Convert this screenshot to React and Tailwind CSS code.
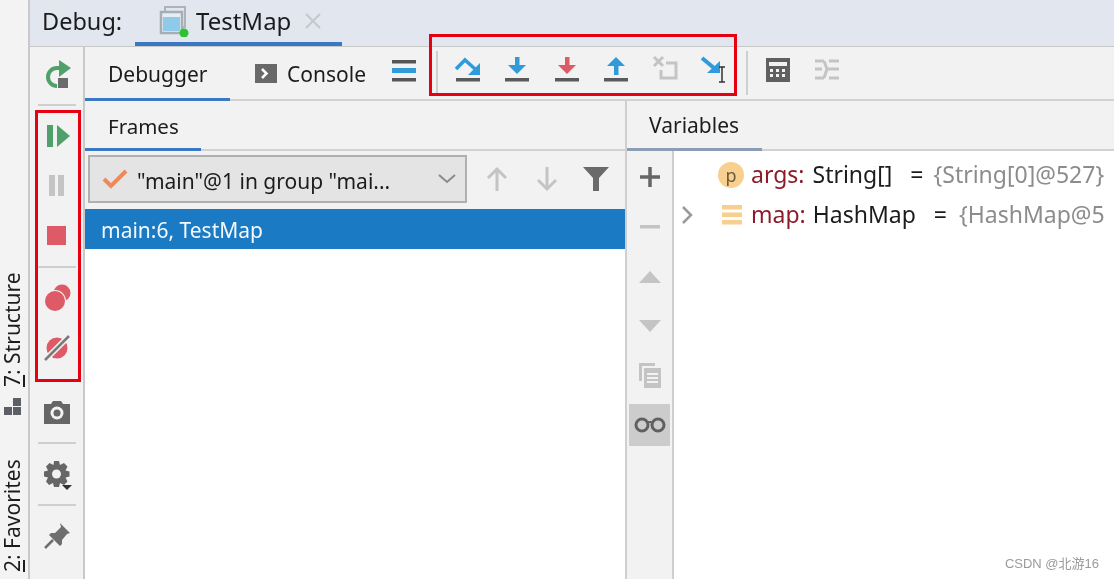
import React from "react";

const Sep = () => <div className="mx-auto h-[2px] w-[38px] bg-[#cfcfcf]" />;

const Ico = ({ children, w = 30, h = 30, vb }) => (
  <svg width={w} height={h} viewBox={vb || `0 0 ${w} ${h}`} className="block">
    {children}
  </svg>
);

const ToolBtn = ({ children }) => (
  <div className="flex h-[50px] items-center justify-center">{children}</div>
);

const StepBtn = ({ children }) => (
  <div className="flex h-[40px] w-[49.5px] shrink-0 items-center justify-center">{children}</div>
);

const Bar = () => <rect x="3" y="25" width="24" height="3.5" fill="#5a5a5a" />;

const App = () => {
  return (
    <div className="relative flex h-[579px] w-[1114px] overflow-hidden bg-white font-['Noto_Sans','Liberation_Sans',sans-serif] text-[21px] text-[#1c1c1c] blur-[0.5px]">
      {/* left stripe */}
      <div className="flex h-full w-[30px] shrink-0 flex-col items-center border-r-2 border-[#c9c9c9] bg-[#f3f3f3]">
        <div className="mr-[4px] mt-[270px] flex h-[120px] items-center justify-center [writing-mode:vertical-rl] rotate-180 text-[21px] leading-[22px] whitespace-nowrap">
          <span><u>7</u>: Structure</span>
        </div>
        <svg width="20" height="20" viewBox="0 0 20 20" className="mr-[2px] mt-[7px] block">
          <rect x="1" y="10" width="8" height="8" fill="#5c6066" />
          <rect x="10" y="10" width="8" height="8" fill="#5c6066" />
          <rect x="10" y="1" width="8" height="8" fill="#5c6066" />
        </svg>
        <div className="mr-[4px] mt-[41px] flex h-[116px] items-center justify-center [writing-mode:vertical-rl] rotate-180 text-[21px] leading-[22px] whitespace-nowrap">
          <span><u>2</u>: Favorites</span>
        </div>
      </div>

      <div className="flex min-w-0 flex-1 flex-col">
        {/* debug tab bar */}
        <div className="flex h-[47px] shrink-0 items-stretch border-b-[1px] border-[#c8c8c8] bg-[#e2e6ee]">
          <div className="ml-[12px] flex w-[93px] items-center pb-[3px] text-[23.5px]">Debug:</div>
          <div className="flex w-[207px] items-center border-b-[4px] border-[#3a78c4] pl-[24px]">
            <svg width="30" height="32" viewBox="0 0 30 32" className="block">
              <rect x="6" y="2" width="20" height="20" fill="none" stroke="#aab4bc" strokeWidth="2" />
              <rect x="2" y="7" width="21" height="21" fill="#e8edf2" stroke="#a4aeb6" strokeWidth="2.5" />
              <rect x="4" y="12" width="17" height="14" fill="#8fcbe8" />
              <circle cx="25" cy="28" r="4.5" fill="#2fc22f" />
            </svg>
            <span className="ml-[7px] text-[24px]">TestMap</span>
            <svg width="18" height="18" viewBox="0 0 18 18" className="ml-[13px] block">
              <path d="M2 2L16 16M16 2L2 16" stroke="#c4c8ce" strokeWidth="2" />
            </svg>
          </div>
        </div>

        <div className="flex min-h-0 flex-1">
          {/* tool column */}
          <div className="flex w-[55px] shrink-0 flex-col border-r-2 border-[#c9c9c9] bg-[#f2f2f2] pt-[2px]">
            <ToolBtn>
              <Ico>
                <path d="M22 9h-7a9 9 0 1 0 0 18" fill="none" stroke="#4fa06b" strokeWidth="4" />
                <path d="M17 1l12 8-12 9z" fill="#4fa06b" />
                <rect x="16" y="19" width="10" height="10" fill="#6b6b6b" />
              </Ico>
            </ToolBtn>
            <div className="mt-[5px]"><Sep /></div>
            <div className="mt-[5px]">
              <ToolBtn>
                <Ico>
                  <rect x="5" y="4" width="6" height="22" fill="#4fa06b" />
                  <path d="M15 4l13 11-13 11z" fill="#4fa06b" />
                </Ico>
              </ToolBtn>
              <ToolBtn>
                <Ico>
                  <rect x="7" y="4" width="6" height="21" fill="#c4c4c4" />
                  <rect x="16" y="4" width="6" height="21" fill="#c4c4c4" />
                </Ico>
              </ToolBtn>
              <ToolBtn>
                <Ico>
                  <rect x="5" y="5" width="19" height="19" fill="#dd5a66" />
                </Ico>
              </ToolBtn>
            </div>
            <div className="mt-[5px]"><Sep /></div>
            <div className="mt-[5px]">
              <ToolBtn>
                <Ico>
                  <circle cx="20" cy="10" r="8.5" fill="#dd5a66" />
                  <circle cx="13" cy="18" r="11" fill="#f2f2f2" />
                  <circle cx="13" cy="18" r="10" fill="#dd5a66" />
                </Ico>
              </ToolBtn>
              <ToolBtn>
                <Ico>
                  <circle cx="15" cy="15" r="10.5" fill="#dd5a66" />
                  <path d="M3 27L27 3" stroke="#f2f2f2" strokeWidth="6" />
                  <path d="M3 27L27 3" stroke="#7a7a7a" strokeWidth="2.5" />
                </Ico>
              </ToolBtn>
            </div>
            <div className="mt-[14px]">
              <ToolBtn>
                <Ico>
                  <path d="M2 7h7l2-3h8l2 3h7v20H2z" fill="#666" />
                  <circle cx="15" cy="16" r="6.5" fill="#f2f2f2" />
                  <circle cx="15" cy="16" r="3.5" fill="#666" />
                </Ico>
              </ToolBtn>
            </div>
            <div className="mt-[5px]"><Sep /></div>
            <div className="mt-[6px]">
              <ToolBtn>
                <Ico>
                  <path d="M12 1h5l1 4 4-2 3.5 3.5-2 4 4 1v5l-4 1 2 4-3.5 3.5-4-2-1 4h-5l-1-4-4 2L4 21.5l2-4-4-1v-5l4-1-2-4L7.5 3l4 2z" fill="#666" />
                  <circle cx="14.5" cy="14" r="4.5" fill="#f2f2f2" />
                  <path d="M20 25h10l-5 5z" fill="#333" />
                </Ico>
              </ToolBtn>
            </div>
            <div className="mt-[4px]"><Sep /></div>
            <div className="mt-[5px]">
              <ToolBtn>
                <Ico>
                  <path d="M18 2l10 10-3 1-5 6 0 4-2 2-11-11 2-2h4l6-6z" fill="#6e6e6e" />
                  <path d="M11 19L3 27" stroke="#6e6e6e" strokeWidth="2.5" />
                </Ico>
              </ToolBtn>
            </div>
          </div>

          <div className="flex min-w-0 flex-1 flex-col">
            {/* debugger toolbar */}
            <div className="flex h-[54px] shrink-0 items-stretch border-b-2 border-[#d2d2d2] bg-[#f2f2f2]">
              <div className="-mb-[2px] flex w-[145px] shrink-0 items-center border-b-[3px] border-[#3a78c4] pl-[23px] pt-[4px]">Debugger</div>
              <div className="flex shrink-0 items-center pl-[25px]">
                <svg width="22" height="19" viewBox="0 0 22 19" className="block">
                  <rect width="22" height="19" fill="#686868" />
                  <path d="M7 5l4.5 4.5L7 14" fill="none" stroke="#fff" strokeWidth="2.5" />
                </svg>
                <span className="ml-[10px] pt-[4px]">Console</span>
              </div>
              <div className="flex shrink-0 items-center pb-[4px] pl-[26px]">
                <svg width="24" height="22" viewBox="0 0 24 22" className="block">
                  <rect y="0" width="24" height="3.5" fill="#555" />
                  <rect y="8" width="24" height="5" fill="#2f9bd9" />
                  <rect y="18" width="24" height="3.5" fill="#555" />
                </svg>
              </div>
              <div className="my-[4px] ml-[20px] w-[2px] shrink-0 bg-[#cfcfcf]" />
              <div className="ml-[5px] flex shrink-0 items-center pb-[10px]">
                <StepBtn>
                  <Ico>
                    <path d="M3 16L12 7l10 9" fill="none" stroke="#2f9bd9" strokeWidth="3.5" />
                    <path d="M27 10v12H15z" fill="#2f9bd9" />
                    <Bar />
                  </Ico>
                </StepBtn>
                <StepBtn>
                  <Ico>
                    <rect x="13" y="4" width="4.5" height="10" fill="#2f9bd9" />
                    <path d="M6 12h18l-9 9z" fill="#2f9bd9" />
                    <Bar />
                  </Ico>
                </StepBtn>
                <StepBtn>
                  <Ico>
                    <rect x="13" y="4" width="4.5" height="10" fill="#dd5a66" />
                    <path d="M6 12h18l-9 9z" fill="#dd5a66" />
                    <Bar />
                  </Ico>
                </StepBtn>
                <StepBtn>
                  <Ico>
                    <path d="M6 13h18l-9-9z" fill="#2f9bd9" />
                    <rect x="13" y="12" width="4.5" height="10" fill="#2f9bd9" />
                    <Bar />
                  </Ico>
                </StepBtn>
                <StepBtn>
                  <Ico>
                    <path d="M3 4l9 9M12 4l-9 9" stroke="#c4c4c4" strokeWidth="3" />
                    <path d="M15 10h10v15H10v-8" fill="none" stroke="#c4c4c4" strokeWidth="3" />
                  </Ico>
                </StepBtn>
                <StepBtn>
                  <Ico>
                    <path d="M2 5l12 10" stroke="#2f9bd9" strokeWidth="4" />
                    <path d="M20 8v12H7z" fill="#2f9bd9" />
                    <path d="M19 14h6M19 29h6M22 14v15" stroke="#333" strokeWidth="1.5" fill="none" />
                  </Ico>
                </StepBtn>
              </div>
              <div className="my-[4px] ml-[6px] w-[2px] shrink-0 bg-[#cfcfcf]" />
              <div className="ml-[18px] flex shrink-0 items-center gap-[25px] pb-[6px]">
                <svg width="24" height="24" viewBox="0 0 24 24" className="block">
                  <rect width="24" height="24" fill="#606060" />
                  <rect x="3" y="4" width="18" height="4" fill="#f2f2f2" />
                  <path d="M4 11h3v3H4zM10 11h3v3h-3zM16 11h3v3h-3zM4 16h3v3H4zM10 16h3v3h-3zM16 16h3v3h-3z" fill="#f2f2f2" />
                </svg>
                <svg width="24" height="22" viewBox="0 0 24 22" className="block">
                  <path d="M0 2h9M14 2h10M0 10h7M12 10h12M0 19h9M14 19h10M9 2l3 8-3 9" fill="none" stroke="#c4c4c4" strokeWidth="3" />
                </svg>
              </div>
            </div>

            {/* panels */}
            <div className="flex min-h-0 flex-1">
              {/* frames */}
              <div className="flex w-[540px] shrink-0 flex-col bg-white">
                <div className="flex h-[50px] shrink-0 border-b-2 border-[#d2d2d2] bg-[#f2f2f2]">
                  <div className="-mb-[2px] flex w-[116px] items-center border-b-[3px] border-[#3a78c4] pl-[23px] pt-[3px] text-[20.5px]">Frames</div>
                </div>
                <div className="flex h-[58px] shrink-0 items-start bg-[#f2f2f2] pl-[3px] pt-[4px]">
                  <div className="flex h-[48px] w-[379px] shrink-0 items-center border-2 border-[#b0b0b0] bg-[#e4e4e4] pl-[12px]">
                    <svg width="26" height="22" viewBox="0 0 26 22" className="block shrink-0">
                      <path d="M2 11l7 7L24 3" fill="none" stroke="#f0895a" strokeWidth="4" />
                    </svg>
                    <span className="ml-[9px] w-[287px] shrink-0 whitespace-nowrap pt-[5px]">"main"@1 in group "mai...</span>
                    <svg width="18" height="10" viewBox="0 0 18 10" className="ml-[14px] block shrink-0">
                      <path d="M1 1l8 7 8-7" fill="none" stroke="#8a8a8a" strokeWidth="2" />
                    </svg>
                  </div>
                  <svg width="22" height="26" viewBox="0 0 22 26" className="ml-[19px] mt-[11px] block shrink-0">
                    <path d="M11 25V3M2 12l9-9 9 9" fill="none" stroke="#c4c4c4" strokeWidth="3" />
                  </svg>
                  <svg width="22" height="26" viewBox="0 0 22 26" className="ml-[28px] mt-[11px] block shrink-0">
                    <path d="M11 1v22M2 14l9 9 9-9" fill="none" stroke="#c4c4c4" strokeWidth="3" />
                  </svg>
                  <svg width="26" height="24" viewBox="0 0 26 24" className="ml-[25px] mt-[12px] block shrink-0">
                    <path d="M0 0h26L16 11v13h-6V11z" fill="#6a6a6a" />
                  </svg>
                </div>
                <div className="flex h-[40px] shrink-0 items-center bg-[#1a7ac4] pl-[16px] pt-[3px] text-[#f4f8fc]">main:6, TestMap</div>
              </div>
              <div className="w-[2px] shrink-0 bg-[#cfcfcf]" />
              {/* variables */}
              <div className="flex min-w-0 flex-1 flex-col">
                <div className="flex h-[50px] shrink-0 border-b-2 border-[#d2d2d2] bg-[#f2f2f2]">
                  <div className="-mb-[2px] flex w-[135px] items-center border-b-[3px] border-[#8a9db5] pl-[22px] pt-[3px] text-[21px]">Variables</div>
                </div>
                <div className="flex min-h-0 flex-1">
                  <div className="flex w-[47px] shrink-0 flex-col items-center border-r-2 border-[#cfcfcf] bg-[#f2f2f2] pt-[1px]">
                    <div className="flex h-[50px] items-center justify-center">
                      <svg width="20" height="20" viewBox="0 0 20 20" className="block">
                        <path d="M10 0v20M0 10h20" stroke="#666" strokeWidth="3.5" />
                      </svg>
                    </div>
                    <div className="flex h-[50px] items-center justify-center">
                      <svg width="20" height="4" viewBox="0 0 20 4" className="block">
                        <rect width="20" height="3.5" fill="#c4c4c4" />
                      </svg>
                    </div>
                    <div className="flex h-[49px] items-center justify-center">
                      <svg width="22" height="12" viewBox="0 0 22 12" className="block">
                        <path d="M11 0l11 12H0z" fill="#c4c4c4" />
                      </svg>
                    </div>
                    <div className="flex h-[49px] items-center justify-center">
                      <svg width="22" height="12" viewBox="0 0 22 12" className="block">
                        <path d="M0 0h22L11 12z" fill="#c4c4c4" />
                      </svg>
                    </div>
                    <div className="flex h-[50px] items-center justify-center">
                      <svg width="24" height="26" viewBox="0 0 24 26" className="block">
                        <path d="M1 1h16v3H4v15H1z" fill="#c4c4c4" />
                        <rect x="6" y="6" width="17" height="20" fill="#c4c4c4" />
                        <path d="M9 12h11M9 16h11M9 20h11" stroke="#f2f2f2" strokeWidth="2" />
                      </svg>
                    </div>
                    <div className="mt-[4px] flex h-[42px] w-[41px] items-center justify-center bg-[#cccccc]">
                      <svg width="32" height="16" viewBox="0 0 32 16" className="block">
                        <path d="M13 6q3-2 6 0" fill="none" stroke="#606060" strokeWidth="2" />
                        <circle cx="8" cy="8" r="6" fill="none" stroke="#606060" strokeWidth="3" />
                        <circle cx="24" cy="8" r="6" fill="none" stroke="#606060" strokeWidth="3" />
                      </svg>
                    </div>
                  </div>
                  <div className="flex min-w-0 flex-1 flex-col overflow-hidden bg-white text-[23px] whitespace-nowrap">
                    <div className="mt-[4px] flex h-[40px] items-center pl-[44px]">
                      <span className="flex h-[26px] w-[26px] shrink-0 items-center justify-center rounded-full bg-[#f8cf8e] text-[18px] leading-none text-[#6a5a40]">p</span>
                      <span className="ml-[7px] -translate-y-[1px] text-[#8c1c2a]">args:</span>
                      <span className="ml-[8px] -translate-y-[1px]">String[]</span>
                      <span className="ml-[18px] -translate-y-[1px]">=</span>
                      <span className="ml-[10px] -translate-y-[1px] text-[#8c8c8c]">{"{String[0]@527}"}</span>
                    </div>
                    <div className="flex h-[40px] items-center pl-[7px]">
                      <svg width="12" height="18" viewBox="0 0 12 18" className="block shrink-0">
                        <path d="M2 1l8 8-8 8" fill="none" stroke="#9a9a9a" strokeWidth="2.5" />
                      </svg>
                      <svg width="20" height="20" viewBox="0 0 20 20" className="ml-[29px] block shrink-0">
                        <path d="M0 0h20v4.5H0zM0 7.5h20V12H0zM0 15h20v4.5H0z" fill="#f8cf8e" />
                      </svg>
                      <span className="ml-[9px] -translate-y-[1px] text-[#8c1c2a]">map:</span>
                      <span className="ml-[7px] -translate-y-[1px]">HashMap</span>
                      <span className="ml-[18px] -translate-y-[1px]">=</span>
                      <span className="ml-[12px] -translate-y-[1px] text-[#8c8c8c]">{"{HashMap@5"}</span>
                    </div>
                  </div>
                </div>
              </div>
            </div>
          </div>
        </div>
      </div>

      {/* red annotation boxes drawn over the screenshot */}
      <div className="absolute left-[35px] top-[110px] h-[272px] w-[46px] border-[3px] border-[#e60012]" />
      <div className="absolute left-[429px] top-[34px] h-[62px] w-[308px] border-[3px] border-[#e60012]" />
      <div className="absolute right-[15px] bottom-[6px] font-['Liberation_Sans','Noto_Sans_CJK_SC',sans-serif] text-[13px] leading-[18px] text-[#9a9a9a]">CSDN @北游16</div>
    </div>
  );
};

export default App;
